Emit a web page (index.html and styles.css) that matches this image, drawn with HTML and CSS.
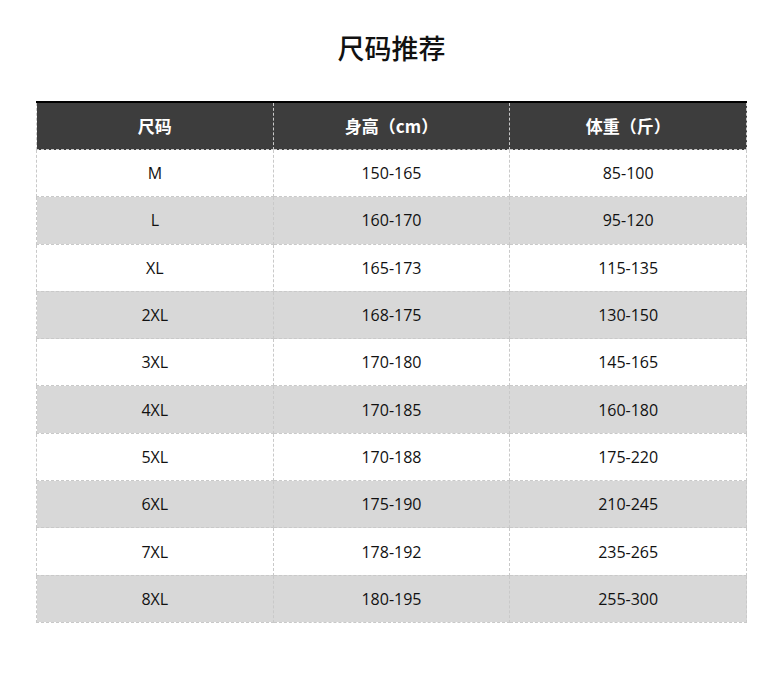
FILE: index.html
```html
<!DOCTYPE html>
<html lang="zh">
<head>
<meta charset="utf-8">
<link rel="stylesheet" href="styles.css">
</head>
<body>
<div class="page">
  <h1 class="title">尺码推荐</h1>
  <table class="size-table">
    <thead>
      <tr><th>尺码</th><th>身高（cm）</th><th>体重（斤）</th></tr>
    </thead>
    <tbody>
      <tr><td>M</td><td>150-165</td><td>85-100</td></tr>
      <tr class="alt"><td>L</td><td>160-170</td><td>95-120</td></tr>
      <tr><td>XL</td><td>165-173</td><td>115-135</td></tr>
      <tr class="alt"><td>2XL</td><td>168-175</td><td>130-150</td></tr>
      <tr><td>3XL</td><td>170-180</td><td>145-165</td></tr>
      <tr class="alt"><td>4XL</td><td>170-185</td><td>160-180</td></tr>
      <tr><td>5XL</td><td>170-188</td><td>175-220</td></tr>
      <tr class="alt"><td>6XL</td><td>175-190</td><td>210-245</td></tr>
      <tr><td>7XL</td><td>178-192</td><td>235-265</td></tr>
      <tr class="alt"><td>8XL</td><td>180-195</td><td>255-300</td></tr>
    </tbody>
  </table>
</div>
</body>
</html>
```
FILE: styles.css
```css
html, body {
  margin: 0;
  padding: 0;
  background: #fff;
}
.page {
  width: 777px;
  padding-top: 29px;
}
.title {
  margin: 0 0 0 6px;
  height: 38px;
  line-height: 38px;
  text-align: center;
  font-family: "Noto Sans CJK SC", sans-serif;
  font-weight: 500;
  font-size: 27px;
  color: #111;
}
.size-table {
  margin: 34px 0 0 36px;
  width: 711px;
  border-collapse: collapse;
  table-layout: fixed;
  font-family: "Open Sans", "Noto Sans CJK SC", sans-serif;
  font-size: 16px;
  color: #111;
}
.size-table th,
.size-table td {
  border: 1px dashed #c9c9c9;
  text-align: center;
  padding: 0;
}
.size-table th {
  height: 45px;
  padding-bottom: 1px;
  background: #3d3d3d;
  color: #fff;
  font-family: "Noto Sans CJK SC", sans-serif;
  font-weight: 700;
  font-size: 17px;
  border-top: 2px solid #000;
}
.size-table td {
  height: 46.3px;
}
.size-table tr.alt td {
  background: #d8d8d8;
}
```
